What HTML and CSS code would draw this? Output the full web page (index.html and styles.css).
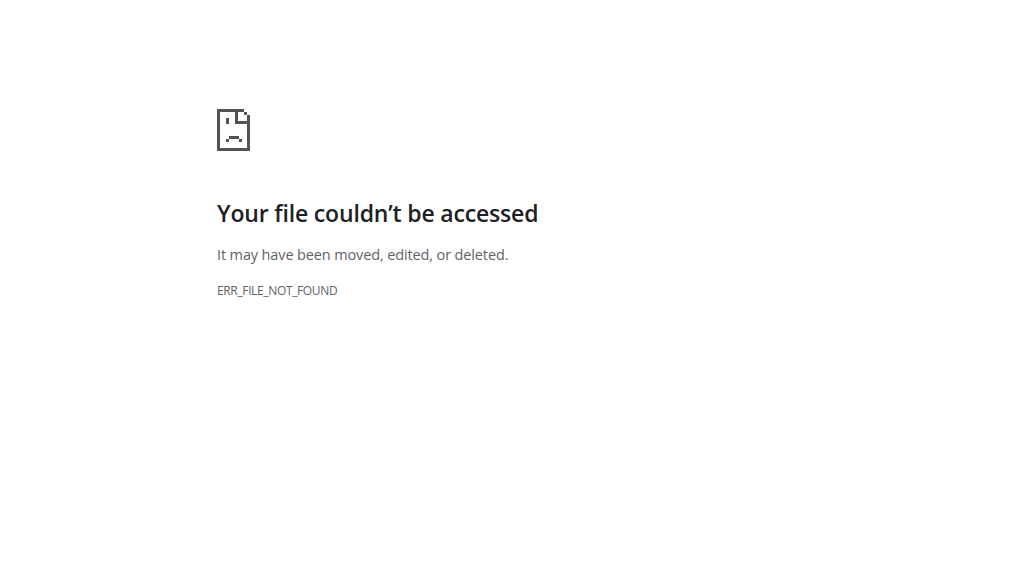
FILE: index.html
```html
<!DOCTYPE html>
<html lang="en">
<head>
<meta charset="utf-8">
<title>File not found</title>
<link rel="stylesheet" href="styles.css">
</head>
<body>
<main class="error-page">
  <svg class="icon" viewBox="0 0 33 42" aria-hidden="true">
    <path d="M0 0H27V3H21V12H30V6H33V42H0ZM3 3V39H30V15H18V3ZM27 3H30V6H27ZM9 9H12V15H9ZM12 27H22V30H12ZM9 30H12V33H9ZM22 30H25V33H22Z"/>
  </svg>
  <h1 class="title">Your file couldn’t be accessed</h1>
  <p class="summary">It may have been moved, edited, or deleted.</p>
  <div class="code">ERR_FILE_NOT_FOUND</div>
</main>
</body>
</html>
```
FILE: styles.css
```css
body {
  margin: 0;
  background: #fff;
  color: #5f6368;
  font-family: "Segoe UI", "Open Sans", sans-serif;
}
.error-page {
  width: 600px;
  margin: 0 auto;
  padding-top: 109px;
}
.icon {
  display: block;
  width: 33px;
  height: 42px;
  fill: #535353;
  fill-rule: evenodd;
  shape-rendering: crispEdges;
}
.title {
  margin: 47px 0 0;
  color: #202124;
  font-size: 23px;
  font-weight: 600;
  line-height: 30px;
  letter-spacing: -0.17px;
}
.summary {
  margin: 15px 0 0;
  font-size: 14.5px;
  line-height: 24px;
  letter-spacing: -0.13px;
}
.code {
  margin-top: 14px;
  font-size: 12px;
  line-height: 20px;
  letter-spacing: -0.36px;
}
```
